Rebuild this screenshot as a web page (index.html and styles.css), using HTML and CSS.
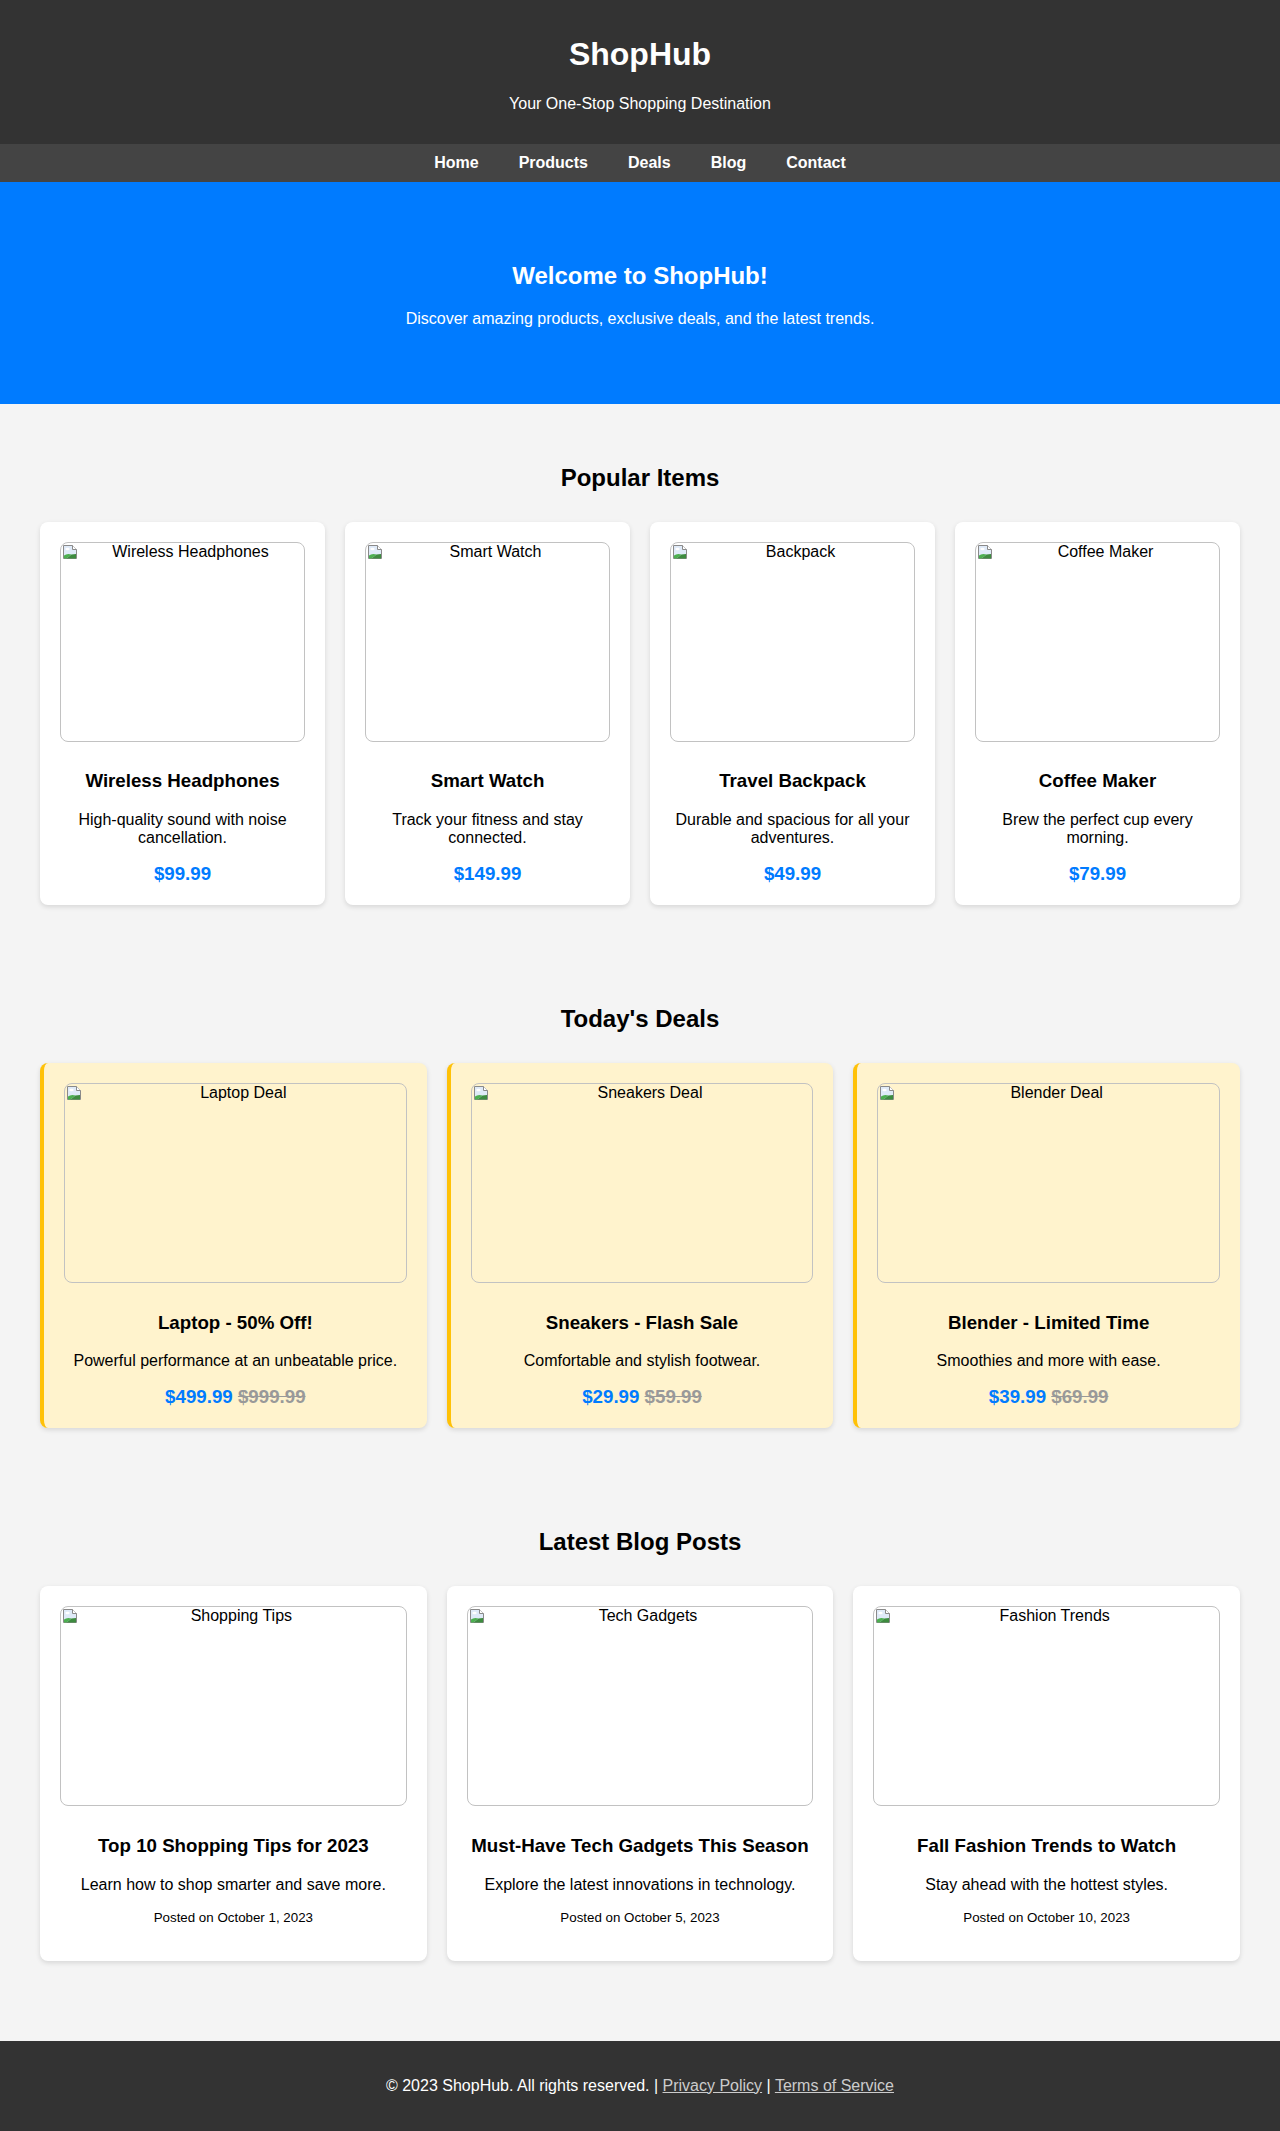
FILE: index.html
```html
<!DOCTYPE html>
<html lang="en">
<head>
<meta charset="UTF-8">
<title>ShopHub</title>
<link rel="stylesheet" href="styles.css">
</head>
<body>
<header class="site-header">
  <h1>ShopHub</h1>
  <p>Your One-Stop Shopping Destination</p>
</header>
<nav class="site-nav">
  <a href="#">Home</a>
  <a href="#">Products</a>
  <a href="#">Deals</a>
  <a href="#">Blog</a>
  <a href="#">Contact</a>
</nav>
<section class="hero">
  <h2>Welcome to ShopHub!</h2>
  <p>Discover amazing products, exclusive deals, and the latest trends.</p>
</section>

<main>
<section class="block">
  <h2 class="block-title">Popular Items</h2>
  <div class="grid grid-4">
    <div class="card">
      <div class="ph"><svg class="ph-icon" width="16" height="16" viewBox="0 0 16 16"><path d="M1.5 1.5h9l4 4v9h-13z" fill="#dfeaf8" stroke="#8a8a8a"/><path d="M10.5 1.5v4h4" fill="#fff" stroke="#8a8a8a"/><ellipse cx="5.5" cy="5" rx="2.2" ry="1.3" fill="#fff"/><path d="M2 14.5V11.5Q5 9 9.5 10.5L4.5 14.5z" fill="#4caf50"/><path d="M9.5 10.5L14 10v4.5H4.5z" fill="#3d8b3f"/></svg><span>Wireless Headphones</span></div>
      <h3>Wireless Headphones</h3>
      <p>High-quality sound with noise cancellation.</p>
      <p class="price">$99.99</p>
    </div>
    <div class="card">
      <div class="ph"><svg class="ph-icon" width="16" height="16" viewBox="0 0 16 16"><path d="M1.5 1.5h9l4 4v9h-13z" fill="#dfeaf8" stroke="#8a8a8a"/><path d="M10.5 1.5v4h4" fill="#fff" stroke="#8a8a8a"/><ellipse cx="5.5" cy="5" rx="2.2" ry="1.3" fill="#fff"/><path d="M2 14.5V11.5Q5 9 9.5 10.5L4.5 14.5z" fill="#4caf50"/><path d="M9.5 10.5L14 10v4.5H4.5z" fill="#3d8b3f"/></svg><span>Smart Watch</span></div>
      <h3>Smart Watch</h3>
      <p>Track your fitness and stay connected.</p>
      <p class="price">$149.99</p>
    </div>
    <div class="card">
      <div class="ph"><svg class="ph-icon" width="16" height="16" viewBox="0 0 16 16"><path d="M1.5 1.5h9l4 4v9h-13z" fill="#dfeaf8" stroke="#8a8a8a"/><path d="M10.5 1.5v4h4" fill="#fff" stroke="#8a8a8a"/><ellipse cx="5.5" cy="5" rx="2.2" ry="1.3" fill="#fff"/><path d="M2 14.5V11.5Q5 9 9.5 10.5L4.5 14.5z" fill="#4caf50"/><path d="M9.5 10.5L14 10v4.5H4.5z" fill="#3d8b3f"/></svg><span>Backpack</span></div>
      <h3>Travel Backpack</h3>
      <p>Durable and spacious for all your adventures.</p>
      <p class="price">$49.99</p>
    </div>
    <div class="card">
      <div class="ph"><svg class="ph-icon" width="16" height="16" viewBox="0 0 16 16"><path d="M1.5 1.5h9l4 4v9h-13z" fill="#dfeaf8" stroke="#8a8a8a"/><path d="M10.5 1.5v4h4" fill="#fff" stroke="#8a8a8a"/><ellipse cx="5.5" cy="5" rx="2.2" ry="1.3" fill="#fff"/><path d="M2 14.5V11.5Q5 9 9.5 10.5L4.5 14.5z" fill="#4caf50"/><path d="M9.5 10.5L14 10v4.5H4.5z" fill="#3d8b3f"/></svg><span>Coffee Maker</span></div>
      <h3>Coffee Maker</h3>
      <p>Brew the perfect cup every morning.</p>
      <p class="price">$79.99</p>
    </div>
  </div>
</section>

<section class="block">
  <h2 class="block-title">Today's Deals</h2>
  <div class="grid grid-3">
    <div class="card deal">
      <div class="ph"><svg class="ph-icon" width="16" height="16" viewBox="0 0 16 16"><path d="M1.5 1.5h9l4 4v9h-13z" fill="#dfeaf8" stroke="#8a8a8a"/><path d="M10.5 1.5v4h4" fill="#fff" stroke="#8a8a8a"/><ellipse cx="5.5" cy="5" rx="2.2" ry="1.3" fill="#fff"/><path d="M2 14.5V11.5Q5 9 9.5 10.5L4.5 14.5z" fill="#4caf50"/><path d="M9.5 10.5L14 10v4.5H4.5z" fill="#3d8b3f"/></svg><span>Laptop Deal</span></div>
      <h3>Laptop - 50% Off!</h3>
      <p>Powerful performance at an unbeatable price.</p>
      <p class="price">$499.99 <span class="old">$999.99</span></p>
    </div>
    <div class="card deal">
      <div class="ph"><svg class="ph-icon" width="16" height="16" viewBox="0 0 16 16"><path d="M1.5 1.5h9l4 4v9h-13z" fill="#dfeaf8" stroke="#8a8a8a"/><path d="M10.5 1.5v4h4" fill="#fff" stroke="#8a8a8a"/><ellipse cx="5.5" cy="5" rx="2.2" ry="1.3" fill="#fff"/><path d="M2 14.5V11.5Q5 9 9.5 10.5L4.5 14.5z" fill="#4caf50"/><path d="M9.5 10.5L14 10v4.5H4.5z" fill="#3d8b3f"/></svg><span>Sneakers Deal</span></div>
      <h3>Sneakers - Flash Sale</h3>
      <p>Comfortable and stylish footwear.</p>
      <p class="price">$29.99 <span class="old">$59.99</span></p>
    </div>
    <div class="card deal">
      <div class="ph"><svg class="ph-icon" width="16" height="16" viewBox="0 0 16 16"><path d="M1.5 1.5h9l4 4v9h-13z" fill="#dfeaf8" stroke="#8a8a8a"/><path d="M10.5 1.5v4h4" fill="#fff" stroke="#8a8a8a"/><ellipse cx="5.5" cy="5" rx="2.2" ry="1.3" fill="#fff"/><path d="M2 14.5V11.5Q5 9 9.5 10.5L4.5 14.5z" fill="#4caf50"/><path d="M9.5 10.5L14 10v4.5H4.5z" fill="#3d8b3f"/></svg><span>Blender Deal</span></div>
      <h3>Blender - Limited Time</h3>
      <p>Smoothies and more with ease.</p>
      <p class="price">$39.99 <span class="old">$69.99</span></p>
    </div>
  </div>
</section>

<section class="block block-last">
  <h2 class="block-title">Latest Blog Posts</h2>
  <div class="grid grid-3">
    <div class="card">
      <div class="ph"><svg class="ph-icon" width="16" height="16" viewBox="0 0 16 16"><path d="M1.5 1.5h9l4 4v9h-13z" fill="#dfeaf8" stroke="#8a8a8a"/><path d="M10.5 1.5v4h4" fill="#fff" stroke="#8a8a8a"/><ellipse cx="5.5" cy="5" rx="2.2" ry="1.3" fill="#fff"/><path d="M2 14.5V11.5Q5 9 9.5 10.5L4.5 14.5z" fill="#4caf50"/><path d="M9.5 10.5L14 10v4.5H4.5z" fill="#3d8b3f"/></svg><span>Shopping Tips</span></div>
      <h3>Top 10 Shopping Tips for 2023</h3>
      <p>Learn how to shop smarter and save more.</p>
      <p class="date">Posted on October 1, 2023</p>
    </div>
    <div class="card">
      <div class="ph"><svg class="ph-icon" width="16" height="16" viewBox="0 0 16 16"><path d="M1.5 1.5h9l4 4v9h-13z" fill="#dfeaf8" stroke="#8a8a8a"/><path d="M10.5 1.5v4h4" fill="#fff" stroke="#8a8a8a"/><ellipse cx="5.5" cy="5" rx="2.2" ry="1.3" fill="#fff"/><path d="M2 14.5V11.5Q5 9 9.5 10.5L4.5 14.5z" fill="#4caf50"/><path d="M9.5 10.5L14 10v4.5H4.5z" fill="#3d8b3f"/></svg><span>Tech Gadgets</span></div>
      <h3>Must-Have Tech Gadgets This Season</h3>
      <p>Explore the latest innovations in technology.</p>
      <p class="date">Posted on October 5, 2023</p>
    </div>
    <div class="card">
      <div class="ph"><svg class="ph-icon" width="16" height="16" viewBox="0 0 16 16"><path d="M1.5 1.5h9l4 4v9h-13z" fill="#dfeaf8" stroke="#8a8a8a"/><path d="M10.5 1.5v4h4" fill="#fff" stroke="#8a8a8a"/><ellipse cx="5.5" cy="5" rx="2.2" ry="1.3" fill="#fff"/><path d="M2 14.5V11.5Q5 9 9.5 10.5L4.5 14.5z" fill="#4caf50"/><path d="M9.5 10.5L14 10v4.5H4.5z" fill="#3d8b3f"/></svg><span>Fashion Trends</span></div>
      <h3>Fall Fashion Trends to Watch</h3>
      <p>Stay ahead with the hottest styles.</p>
      <p class="date">Posted on October 10, 2023</p>
    </div>
  </div>
</section>
</main>

<footer class="site-footer">
  <p>&copy; 2023 ShopHub. All rights reserved. | <a href="#">Privacy Policy</a> | <a href="#">Terms of Service</a></p>
</footer>
</body>
</html>
```

FILE: styles.css
```css
* {
  box-sizing: border-box;
}

body {
  margin: 0;
  background: #f4f4f4;
  color: #000;
  font-family: "Liberation Sans", Arial, Helvetica, sans-serif;
  font-size: 16px;
}

.site-header {
  background: #333;
  color: #fff;
  text-align: center;
  padding: 15px 20px;
}

.site-header h1 {
  font-size: 32px;
  margin: 21.44px 0;
}

.site-header p {
  margin: 16px 0;
}

.site-nav {
  background: #444;
  display: flex;
  justify-content: center;
  gap: 40px;
  padding: 10px 0;
}

.site-nav a {
  color: #fff;
  font-weight: bold;
  text-decoration: none;
}

.hero {
  background: #007bff;
  color: #fff;
  text-align: center;
  padding: 60px 20px;
}

.hero h2 {
  font-size: 24px;
  margin: 19.92px 0;
}

.hero p {
  margin: 16px 0;
}

main {
  padding-bottom: 40px;
}

.block {
  padding: 40px;
}

.block-title {
  text-align: center;
  font-size: 24px;
  margin: 19.92px 0 30px;
}

.grid {
  display: grid;
  gap: 20px;
}

.grid-4 {
  grid-template-columns: repeat(4, 1fr);
}

.grid-3 {
  grid-template-columns: repeat(3, 1fr);
}

.card {
  background: #fff;
  border-radius: 8px;
  box-shadow: 0 2px 5px rgba(0, 0, 0, 0.12);
  padding: 20px;
  text-align: center;
}

.card.deal {
  background: #fff3cd;
  border-left: 4px solid #ffc107;
}

.ph {
  display: flex;
  align-items: flex-start;
  height: 200px;
  border: 1px solid #c2c2c2;
  border-radius: 8px;
  margin-bottom: 28.72px;
}

.ph-icon {
  flex: none;
  margin: 1px 0 0 1px;
}

.ph span {
  flex: 1;
  text-align: center;
  line-height: 18.4px;
  padding-right: 1px;
}

.card h3 {
  font-size: 18.72px;
  margin: 18.72px 0;
}

.card p {
  margin: 16px 0;
}

.card .price {
  color: #007bff;
  font-weight: bold;
  font-size: 18.72px;
  margin: 16px 0 0;
}

.price .old {
  color: #999;
  text-decoration: line-through;
}

.card .date {
  font-size: 13.33px;
  margin: 16px 0;
}

.site-footer {
  background: #333;
  color: #fff;
  text-align: center;
  padding: 20px;
}

.site-footer p {
  margin: 16px 0;
}

.site-footer a {
  color: #ccc;
  text-decoration: underline;
}
```
